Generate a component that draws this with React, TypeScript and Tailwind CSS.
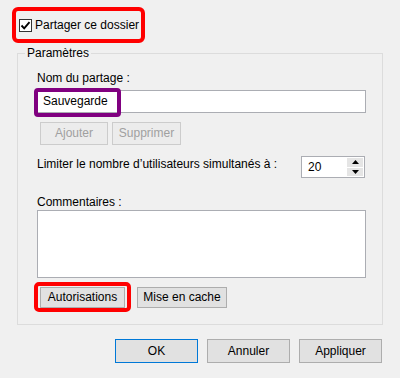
import React from "react";

function Btn({
  children,
  className = "",
  disabled = false,
  primary = false,
}: {
  children: React.ReactNode;
  className?: string;
  disabled?: boolean;
  primary?: boolean;
}) {
  const tone = disabled
    ? "bg-[#ececec] border-[#cccccc] text-[#a0a0a0]"
    : primary
    ? "bg-[#e1e1e1] border-[#0078d7] text-black"
    : "bg-[#e1e1e1] border-[#adadad] text-black";
  return (
    <div
      className={`flex items-center justify-center border leading-[15px] ${tone} ${className}`}
    >
      {children}
    </div>
  );
}

export default function App() {
  return (
    <div className="w-[400px] h-[378px] overflow-hidden bg-[#f0f0f0] text-[12px] leading-[15px] text-black font-['Liberation_Sans',Arial,sans-serif]">
      {/* Checkbox row */}
      <div className="pt-[7px] pl-[12px]">
        <div className="flex h-[36px] w-[133px] items-center rounded-[6px] border-4 border-[#ff0000] pl-[3px]">
          <div className="flex h-[13px] w-[13px] items-center justify-center border border-[#333333] bg-white">
            <svg width="11" height="11" viewBox="0 0 11 11">
              <path
                d="M1.5 5.5 L4.2 8.3 L9.5 2.2"
                fill="none"
                stroke="#000"
                strokeWidth="1.9"
              />
            </svg>
          </div>
          <span className="ml-[3px] whitespace-nowrap">Partager ce dossier</span>
        </div>
      </div>

      {/* Group box */}
      <fieldset className="ml-[17px] mt-[2px] h-[280px] w-[366px] border border-[#dcdcdc] p-0">
        <legend className="ml-[7px] px-[2px] leading-[16px]">Paramètres</legend>
        <div className="pl-[19px] pr-[16px]">
          <div className="mt-[10px]">Nom du partage :</div>
          <div className="relative mt-[4px] flex h-[23px] w-[329px] items-center border border-[#abadb3] bg-white pl-[5px]">
            Sauvegarde
            <div className="absolute left-[-4px] top-[-3px] h-[29px] w-[87px] rounded-[4px] border-4 border-[#800080]" />
          </div>
          <div className="mt-[9px] flex gap-[4px] pl-[3px]">
            <Btn disabled className="h-[23px] w-[68px]">
              Ajouter
            </Btn>
            <Btn disabled className="h-[23px] w-[69px]">
              Supprimer
            </Btn>
          </div>
          <div className="mt-[11px] flex items-start">
            <span className="mt-[1px] whitespace-nowrap">
              Limiter le nombre d’utilisateurs simultanés à :
            </span>
            <div className="ml-auto mr-[1px] flex h-[22px] w-[64px] border border-[#abadb3] bg-white">
              <div className="flex flex-1 items-center pl-[6px]">20</div>
              <div className="flex w-[18px] flex-col gap-[1px] p-[1px]">
                <div className="flex flex-1 items-center justify-center bg-[#e5e5e5]">
                  <svg width="7" height="4" viewBox="0 0 7 4">
                    <path d="M0 4 L3.5 0 L7 4 Z" fill="#000" />
                  </svg>
                </div>
                <div className="flex flex-1 items-center justify-center bg-[#e5e5e5]">
                  <svg width="7" height="4" viewBox="0 0 7 4">
                    <path d="M0 0 L3.5 4 L7 0 Z" fill="#000" />
                  </svg>
                </div>
              </div>
            </div>
          </div>
          <div className="mt-[17px]">Commentaires :</div>
          <div className="h-[68px] w-[329px] border border-[#abadb3] bg-white" />
          <div className="mt-[4px] flex items-start">
            <div className="-ml-[3px] rounded-[5px] border-4 border-[#ff0000] pb-0 pl-[2px] pr-[2px] pt-[1px]">
              <Btn className="h-[21px] w-[85px]">Autorisations</Btn>
            </div>
            <Btn className="ml-[6px] mt-[5px] h-[21px] w-[90px]">Mise en cache</Btn>
          </div>
        </div>
      </fieldset>

      {/* Footer */}
      <div className="mt-[14px] flex justify-end gap-[9px] pr-[18px]">
        <Btn primary className="h-[24px] w-[83px]">
          OK
        </Btn>
        <Btn className="h-[24px] w-[83px]">Annuler</Btn>
        <Btn className="h-[24px] w-[83px]">Appliquer</Btn>
      </div>
    </div>
  );
}
